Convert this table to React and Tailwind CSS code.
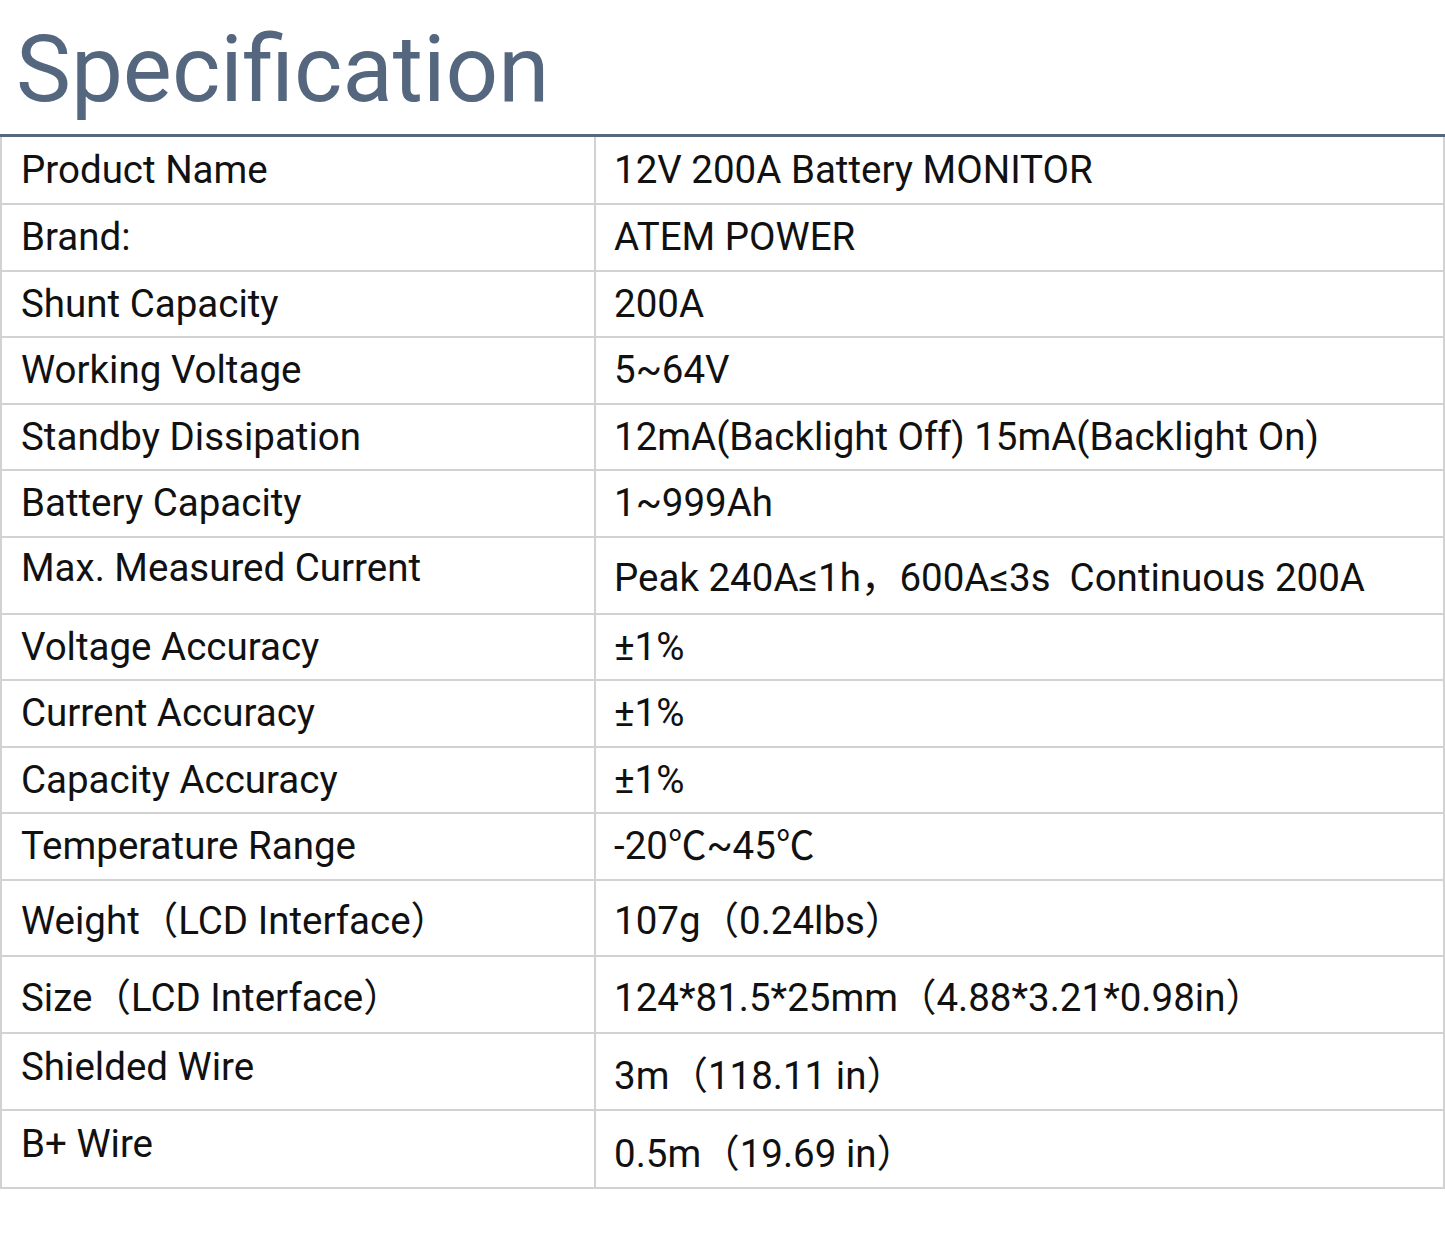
import React from "react";

const rows = [
  { h: "h-[68px]", l: "Product Name", r: "12V 200A Battery MONITOR", lc: "", rc: "" },
  { h: "h-[67px]", l: "Brand:", r: "ATEM POWER", lc: "", rc: "" },
  { h: "h-[66px]", l: "Shunt Capacity", r: "200A", lc: "", rc: "" },
  { h: "h-[67px]", l: "Working Voltage", r: "5~64V", lc: "", rc: "" },
  { h: "h-[66px]", l: "Standby Dissipation", r: "12mA(Backlight Off) 15mA(Backlight On)", lc: "", rc: "" },
  { h: "h-[67px]", l: "Battery Capacity", r: "1~999Ah", lc: "", rc: "" },
  { h: "h-[77px]", l: "Max. Measured Current", r: "Peak 240A≤1h，600A≤3s  Continuous 200A", lc: "pb-[14px]", rc: "pt-[6px]" },
  { h: "h-[66px]", l: "Voltage Accuracy", r: "±1%", lc: "", rc: "" },
  { h: "h-[67px]", l: "Current Accuracy", r: "±1%", lc: "", rc: "" },
  { h: "h-[66px]", l: "Capacity Accuracy", r: "±1%", lc: "", rc: "" },
  { h: "h-[67px]", l: "Temperature Range", r: "-20℃~45℃", lc: "", rc: "" },
  { h: "h-[76px]", l: "Weight（LCD Interface）", r: "107g（0.24lbs）", lc: "pt-[6px]", rc: "pt-[6px]" },
  { h: "h-[77px]", l: "Size（LCD Interface）", r: "124*81.5*25mm（4.88*3.21*0.98in）", lc: "pt-[7px]", rc: "pt-[7px]" },
  { h: "h-[77px]", l: "Shielded Wire", r: "3m（118.11 in）", lc: "pb-[9px]", rc: "pt-[9px]" },
  { h: "h-[78px]", l: "B+ Wire", r: "0.5m（19.69 in）", lc: "pb-[10px]", rc: "pt-[10px]" },
];

export default function App() {
  return (
    <div className="w-[1445px] h-[1235px] bg-white font-['Roboto','Noto_Sans_CJK_SC',sans-serif] text-[#111]">
      <div className="h-[134px] pt-[24px] pl-[16px]">
        <h1 className="text-[92.5px] leading-none text-[#55667f] font-normal">Specification</h1>
      </div>
      <div className="border-t-[3px] border-[#56677e]">
        <div className="border-l-2 border-r-2 border-[#d2d2d2] w-[1445px]">
          {rows.map((row, i) => (
            <div key={i} className={`grid grid-cols-[594px_1fr] border-b-2 border-[#d2d2d2] ${row.h}`}>
              <div className={`flex items-center border-r-2 border-[#d2d2d2] pl-[19px] text-[38.5px] leading-none whitespace-pre ${row.lc}`}>
                {row.l}
              </div>
              <div className={`flex items-center pl-[18px] text-[38.5px] leading-none whitespace-pre ${row.rc}`}>
                {row.r}
              </div>
            </div>
          ))}
        </div>
      </div>
    </div>
  );
}
